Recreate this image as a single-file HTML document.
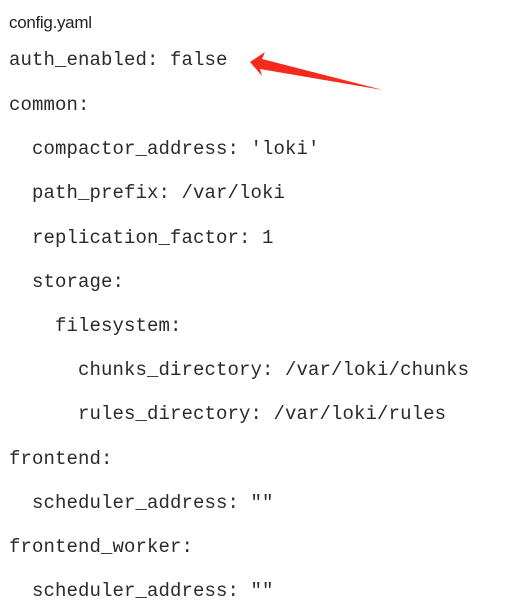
<!DOCTYPE html>
<html><head><meta charset="utf-8"><style>
body{margin:0;width:526px;height:615px;background:#fff;position:relative;overflow:hidden;color:#222}
.t{position:absolute;left:9px;top:13px;font:17px "Liberation Sans",sans-serif;letter-spacing:-0.3px}
.c{position:absolute;left:9px;font:19px/22px "Liberation Mono",monospace;white-space:pre;color:#2a2a2a;letter-spacing:0.1px}
</style></head><body>
<div class="t">config.yaml</div>
<div class="c" style="top:49px">auth_enabled: false</div>
<div class="c" style="top:94px">common:</div>
<div class="c" style="top:138px">  compactor_address: 'loki'</div>
<div class="c" style="top:182px">  path_prefix: /var/loki</div>
<div class="c" style="top:227px">  replication_factor: 1</div>
<div class="c" style="top:271px">  storage:</div>
<div class="c" style="top:315px">    filesystem:</div>
<div class="c" style="top:359px">      chunks_directory: /var/loki/chunks</div>
<div class="c" style="top:403px">      rules_directory: /var/loki/rules</div>
<div class="c" style="top:448px">frontend:</div>
<div class="c" style="top:492px">  scheduler_address: ""</div>
<div class="c" style="top:536px">frontend_worker:</div>
<div class="c" style="top:580px">  scheduler_address: ""</div>
<svg style="position:absolute;left:0;top:0" width="526" height="615">
<polygon points="250,62 265,52 262,59 383,90 260,69 262,76" fill="#f52a1c"/>
</svg>
</body></html>
